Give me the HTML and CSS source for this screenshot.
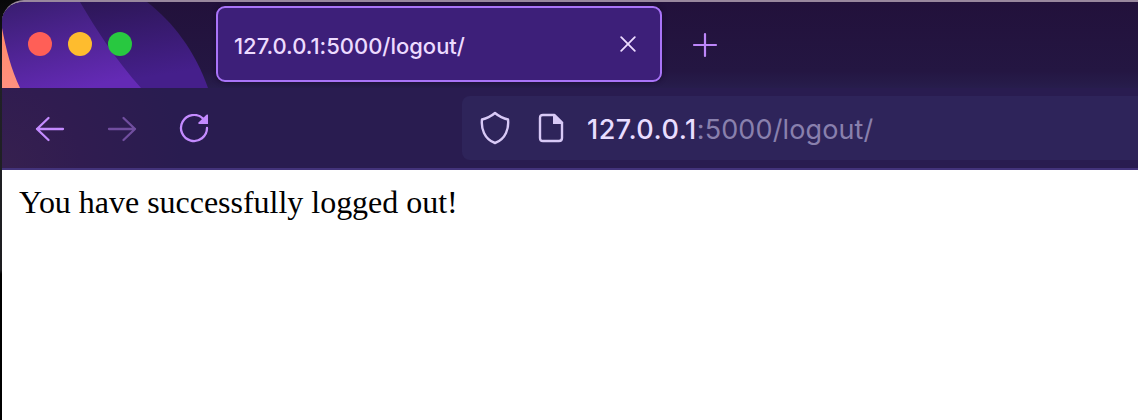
FILE: index.html
```
<!DOCTYPE html>
<html lang="en">
<head>
<meta charset="utf-8">
<title>127.0.0.1:5000/logout/</title>
<link rel="stylesheet" href="styles.css">
</head>
<body>
<div class="window">
  <header class="tabbar">
    <svg class="theme-art" width="208" height="86" viewBox="2 2 208 86" aria-hidden="true">
      <defs>
        <linearGradient id="outer" x1="0" y1="0" x2="0.4" y2="1"><stop offset="0" stop-color="#29154f"/><stop offset="1" stop-color="#451f8b"/></linearGradient>
        <linearGradient id="inner" x1="0.2" y1="0" x2="0.6" y2="1"><stop offset="0" stop-color="#3b1e74"/><stop offset="1" stop-color="#642ab5"/></linearGradient>
        <linearGradient id="coral" x1="0" y1="0" x2="0" y2="1"><stop offset="0" stop-color="#ff8a68"/><stop offset="1" stop-color="#ff9180"/></linearGradient>
      </defs>
      <path d="M2 2H147C173 22 195 51 208 88H2Z" fill="url(#outer)"/>
      <path d="M2 2H80C97 31 116 60 141 88H2Z" fill="url(#inner)"/>
      <path d="M2 28C6 49 11 69 20 88H2Z" fill="url(#coral)"/>
    </svg>
    <div class="lights"><span class="light close"></span><span class="light minimize"></span><span class="light expand"></span></div>
    <div class="tab">
      <span class="tab-title">127.0.0.1:5000/logout/</span>
      <svg class="tab-close" width="16" height="16" viewBox="0 0 16 16"><path d="M1.2 1.2 14.8 14.8M14.8 1.2 1.2 14.8"/></svg>
    </div>
    <svg class="new-tab" width="26" height="26" viewBox="0 0 26 26"><path d="M13 2V24M2 13H24"/></svg>
  </header>
  <nav class="toolbar">
    <div class="nav-buttons">
      <svg class="nav-icon" width="30" height="30" viewBox="0 0 30 30"><path d="M28 15H2M13.5 4 2 15 13.5 26"/></svg>
      <svg class="nav-icon disabled" width="30" height="30" viewBox="0 0 30 30"><path d="M2 15H28M16.5 4 28 15 16.5 26"/></svg>
      <svg class="nav-icon reload" width="30" height="30" viewBox="0 0 30 30"><path d="M28 14A13 13 0 1 1 24 4.600"/><path class="solid" d="M29 .8V10H20Q18.700 9.500 19.500 8.500L27.500 .8Q28.500 0 29 .8Z"/></svg>
    </div>
    <div class="urlbar">
      <svg class="url-icon" width="30" height="34" viewBox="0 0 30 34"><path d="M15 2C12 4.500 7 7.500 2 8.500C1 17 4 28 15 32C26 28 29 17 28 8.500C23 7.500 18 4.500 15 2Z"/></svg>
      <svg class="url-icon page-icon" width="26" height="30" viewBox="0 0 26 30"><path d="M5 2H16.500L24 9.500V25Q24 28 21 28H5Q2 28 2 25V5Q2 2 5 2Z"/><path class="solid" d="M15 1.500H17L25 9.500V11H15Z"/></svg>
      <span class="address"><span class="host">127.0.0.1</span>:5000/logout/</span>
    </div>
  </nav>
  <main class="page">You have successfully logged out!</main>
</div>
</body>
</html>
```
FILE: styles.css
```
* { box-sizing: border-box; }
body {
  margin: 0;
  height: 420px;
  overflow: hidden;
  padding-left: 2px;
  background: linear-gradient(#08080a 0, #202126 90px, #1d1d20 270px, #000 274px);
}
svg { display: block; flex: none; }
.window {
  height: 420px;
  border-top: 2px solid #99889e;
  border-top-left-radius: 22px;
  overflow: hidden;
  background: #fff;
}
.tabbar {
  position: relative;
  display: flex;
  align-items: flex-start;
  height: 86px;
  background: linear-gradient(#22113b, #241642 80%, #271d4c);
}
.theme-art { position: absolute; left: 0; top: 0; }
.lights {
  position: relative;
  display: flex;
  gap: 16px;
  width: 214px;
  padding: 30px 0 0 26px;
}
.light { width: 24px; height: 24px; border-radius: 50%; }
.close { background: #ff5f57; }
.minimize { background: #febc2e; }
.expand { background: #28c840; }
.tab {
  display: flex;
  align-items: center;
  justify-content: space-between;
  width: 446px;
  height: 76px;
  margin-top: 4px;
  padding: 0 24px 0 16px;
  border: 2px solid #a974f8;
  border-radius: 9px;
  background: #3d1f79;
  box-shadow: 0 0 5px #180c2d;
}
.tab-title {
  font: 500 22px/28px Inter, "Liberation Sans", sans-serif;
  letter-spacing: -0.02px;
  color: #eddbff;
  padding-top: 3px;
}
.tab-close { fill: none; stroke: #eddbff; stroke-width: 1.8; stroke-linecap: round; }
.new-tab { margin: 30px 0 0 30px; fill: none; stroke: #bd86fa; stroke-width: 2.2; stroke-linecap: round; }
.toolbar {
  display: flex;
  height: 82px;
  border-bottom: 2px solid #43337b;
  background: radial-gradient(circle at 0 78px, #36204f 0, #301c50 80px, #291c50 180px, #291c50);
}
.nav-buttons { display: flex; gap: 42px; width: 460px; padding: 26px 0 0 33px; }
.nav-icon { fill: none; stroke: #c48bff; stroke-width: 2.3; stroke-linecap: round; stroke-linejoin: round; }
.disabled { opacity: .45; }
.solid { stroke: none; }
.nav-icon .solid { fill: #c48bff; }
.urlbar {
  display: flex;
  align-items: center;
  flex: 1;
  height: 64px;
  margin-top: 8px;
  padding-left: 18px;
  border-radius: 8px 0 0 8px;
  background: #2e245a;
}
.url-icon { fill: none; stroke: #d8c9f6; stroke-width: 2.4; stroke-linejoin: round; }
.url-icon .solid { fill: #d8c9f6; }
.page-icon { margin-left: 28px; }
.address {
  margin-left: 23px;
  font: 400 27px/34px Inter, "Liberation Sans", sans-serif;
  letter-spacing: 0.12px;
  color: #8980ad;
  padding-top: 3px;
  white-space: nowrap;
}
.host { font-weight: 500; letter-spacing: 0.5px; color: #e9ddff; }
.page {
  padding: 14px 17px;
  font: 32px/36px "Liberation Serif", "Times New Roman", serif;
  letter-spacing: -0.02px;
  color: #000;
}
```
